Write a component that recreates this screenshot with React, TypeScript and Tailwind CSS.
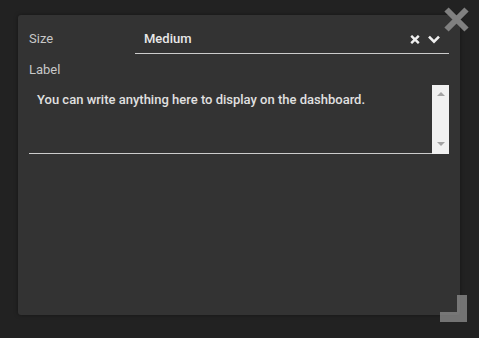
import React from "react";

export default function App() {
  return (
    <div
      className="w-[479px] h-[338px] bg-[#222222] overflow-hidden pt-[15px] pl-[18px]"
      style={{ fontFamily: "Roboto, 'Liberation Sans', sans-serif" }}
    >
      <div className="relative w-[442px] h-[300px] bg-[#333333] rounded-[3px] px-[11px] pt-[16px] shadow-[0_0_4px_rgba(0,0,0,0.4)]">
        {/* Size row */}
        <div className="flex items-end">
          <div className="w-[106px] text-[13px] leading-[16px] text-[#c8c8c8] pb-[7px]">Size</div>
          <div className="flex-1 flex items-center border-b border-[#cccccc] pb-[6px]">
            <div className="flex-1 pl-[9px] text-[13px] leading-[16px] font-medium text-[#e8e8e8]">Medium</div>
            <svg width="10" height="9" viewBox="0 0 10 9" className="mr-[8px] mt-[1px]">
              <path d="M1.2 0.8 L8.8 8.2 M8.8 0.8 L1.2 8.2" stroke="#f0f0f0" strokeWidth="2.4" />
            </svg>
            <svg width="12" height="9" viewBox="0 0 12 9" className="mr-[9px] mt-[1px]">
              <path d="M1 1.6 L6 6.6 L11 1.6" stroke="#f0f0f0" strokeWidth="2.6" fill="none" />
            </svg>
          </div>
        </div>

        {/* Label */}
        <div className="mt-[8px] text-[13px] leading-[16px] text-[#c8c8c8]">Label</div>

        {/* Textarea */}
        <div className="mt-[7px] flex h-[69px]">
          <div className="flex-1 border-b border-[#cccccc] pl-[8px] pt-[6px] text-[13px] leading-[17px] font-medium text-[#e0e0e0]">
            You can write anything here to display on the dashboard.
          </div>
          <div className="w-[17px] bg-[#f1f1f1] flex flex-col items-center justify-between pt-[6px] pb-[7px]">
            <svg width="8" height="5" viewBox="0 0 8 5">
              <path d="M0 5 L4 1 L8 5 Z" fill="#a3a3a3" />
            </svg>
            <svg width="8" height="5" viewBox="0 0 8 5">
              <path d="M0 0 L8 0 L4 4 Z" fill="#a3a3a3" />
            </svg>
          </div>
        </div>

        {/* Close button */}
        <svg
          width="27"
          height="27"
          viewBox="0 0 27 27"
          className="absolute right-[-10px] top-[-9px]"
        >
          <path d="M3.5 3.5 L23.5 23.5 M23.5 3.5 L3.5 23.5" stroke="#808080" strokeWidth="6" />
        </svg>

        {/* Resize handle */}
        <div className="absolute right-[-7px] bottom-[-7px] w-[10px] h-[27px] bg-[#888888]/80" />
        <div className="absolute right-[3px] bottom-[-7px] w-[17px] h-[10px] bg-[#888888]/80" />
      </div>
    </div>
  );
}
